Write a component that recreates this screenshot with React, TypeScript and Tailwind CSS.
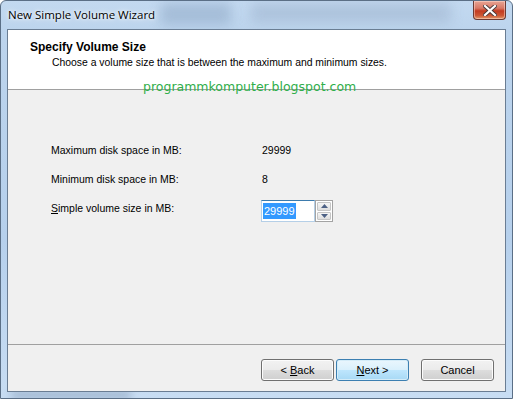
import React from "react";

const ui = { fontFamily: '"Liberation Sans", Arial, sans-serif' };

function Btn({ children, primary }: { children: React.ReactNode; primary?: boolean }) {
  return (
    <div
      className={
        "w-[73px] h-[22px] rounded-[3px] border flex items-center justify-center text-[11px] text-black " +
        (primary
          ? "border-[#3c7fb1] bg-[linear-gradient(to_bottom,#eaf6fd_0%,#d9f0fc_50%,#bee6fd_50%,#a7d9f5_100%)] shadow-[inset_0_0_0_1px_#d4ecf8]"
          : "border-[#707070] bg-[linear-gradient(to_bottom,#f2f2f2_0%,#ebebeb_50%,#dddddd_50%,#cfcfcf_100%)] shadow-[inset_0_0_0_1px_#fcfcfc]")
      }
    >
      <span className="whitespace-pre">{children}</span>
    </div>
  );
}

export default function App() {
  return (
    <div
      className="w-[513px] h-[399px] flex flex-col overflow-hidden rounded-t-[6px] border border-[#5b6f86] bg-[linear-gradient(to_bottom,#c3d9f0_0%,#bcd4ed_8%,#b6d0ec_60%,#c8ddf3_100%)] relative"
      style={ui}
    >
      {/* blurred background patches in the glass */}
      <div className="absolute left-[160px] top-[2px] w-[70px] h-[22px] bg-[#9ab3cf] blur-[6px] opacity-70" />
      <div className="absolute left-[250px] top-[2px] w-[200px] h-[20px] bg-[#a6bcd6] blur-[6px] opacity-70" />
      <div className="absolute left-[10px] bottom-0 w-[120px] h-[6px] bg-[#6f86a4] blur-[4px] opacity-60" />

      {/* title bar */}
      <div className="h-[28px] flex items-start justify-between relative">
        <div
          className="pl-[7px] pt-[5px] text-[11.5px] text-black [text-shadow:0_0_6px_#ffffff,0_0_3px_#ffffff]"
          style={{ fontFamily: '"Open Sans", "Liberation Sans", sans-serif' }}
        >
          New Simple Volume Wizard
        </div>
        <div className="mr-[6px] w-[33px] h-[19px] rounded-b-[4px] border border-t-0 border-[#6b3a33] bg-[linear-gradient(to_bottom,#e8a594_0%,#d87866_40%,#c33b20_55%,#cc5634_80%,#e29a6b_100%)] flex items-center justify-center shadow-[inset_0_0_0_1px_rgba(255,220,210,0.5)]">
          <svg width="14" height="11" viewBox="0 0 14 11">
            <path d="M2 1 L12 10 M12 1 L2 10" stroke="#4a3a3a" strokeWidth="4" strokeLinecap="square" />
            <path d="M2 1 L12 10 M12 1 L2 10" stroke="#ffffff" strokeWidth="2.2" strokeLinecap="square" />
          </svg>
        </div>
      </div>

      {/* client area */}
      <div className="mx-[6px] mb-[6px] flex-1 flex flex-col border border-[#6a7d93] bg-[#f0f0f0] relative">
        {/* header */}
        <div className="h-[60px] bg-white border-b border-[#a0a0a0] pt-[9px]">
          <div className="pl-[22px] text-[12px] font-bold leading-[16px] text-black">Specify Volume Size</div>
          <div className="pl-[44px] text-[10.4px] leading-[16px] text-black">
            Choose a volume size that is between the maximum and minimum sizes.
          </div>
        </div>

        {/* watermark */}
        <div
          className="absolute left-[135px] top-[49px] text-[12.5px] leading-[16px] text-[#2fae4a]"
          style={{ fontFamily: '"DejaVu Sans", "Open Sans", sans-serif' }}
        >
          programmkomputer.blogspot.com
        </div>

        {/* body */}
        <div className="h-[255px] border-b border-[#a0a0a0] pl-[43px] pt-[52px] text-[10.5px] text-black">
          <div className="grid grid-cols-[211px_auto] gap-y-[13px] leading-[16px]">
            <div>Maximum disk space in MB:</div>
            <div>29999</div>
            <div>Minimum disk space in MB:</div>
            <div>8</div>
            <div>
              <span className="underline">S</span>imple volume size in MB:
            </div>
            <div className="flex items-start -ml-[1px]">
              <div className="w-[54px] h-[22px] bg-white border border-[#b5cfe7] border-t-[#3d7bad] flex items-center pl-[1px]">
                <span className="bg-[#3399ff] text-white px-[1px] text-[11px] leading-[16px]">29999</span>
              </div>
              <div className="w-[18px] h-[22px] border border-[#a3a3a3] bg-white flex flex-col gap-px p-px">
                <div className="flex-1 rounded-[1px] border border-[#c5c5c5] bg-[linear-gradient(to_bottom,#f5f5f5,#dedede)] flex items-center justify-center">
                  <svg width="7" height="4" viewBox="0 0 7 4">
                    <path d="M0 4 L3.5 0 L7 4 Z" fill="#4d6185" />
                  </svg>
                </div>
                <div className="flex-1 rounded-[1px] border border-[#c5c5c5] bg-[linear-gradient(to_bottom,#f5f5f5,#dedede)] flex items-center justify-center">
                  <svg width="7" height="4" viewBox="0 0 7 4">
                    <path d="M0 0 L3.5 4 L7 0 Z" fill="#4d6185" />
                  </svg>
                </div>
              </div>
            </div>
          </div>
        </div>

        {/* footer */}
        <div className="flex-1 flex items-start justify-end pt-[14px] pr-[11px]">
          <div className="flex gap-[2px]">
            <Btn>
              {"< "}
              <span className="underline">B</span>ack
            </Btn>
            <Btn primary>
              <span className="underline">N</span>
              {"ext >"}
            </Btn>
          </div>
          <div className="ml-[12px]">
            <Btn>Cancel</Btn>
          </div>
        </div>
      </div>
    </div>
  );
}
